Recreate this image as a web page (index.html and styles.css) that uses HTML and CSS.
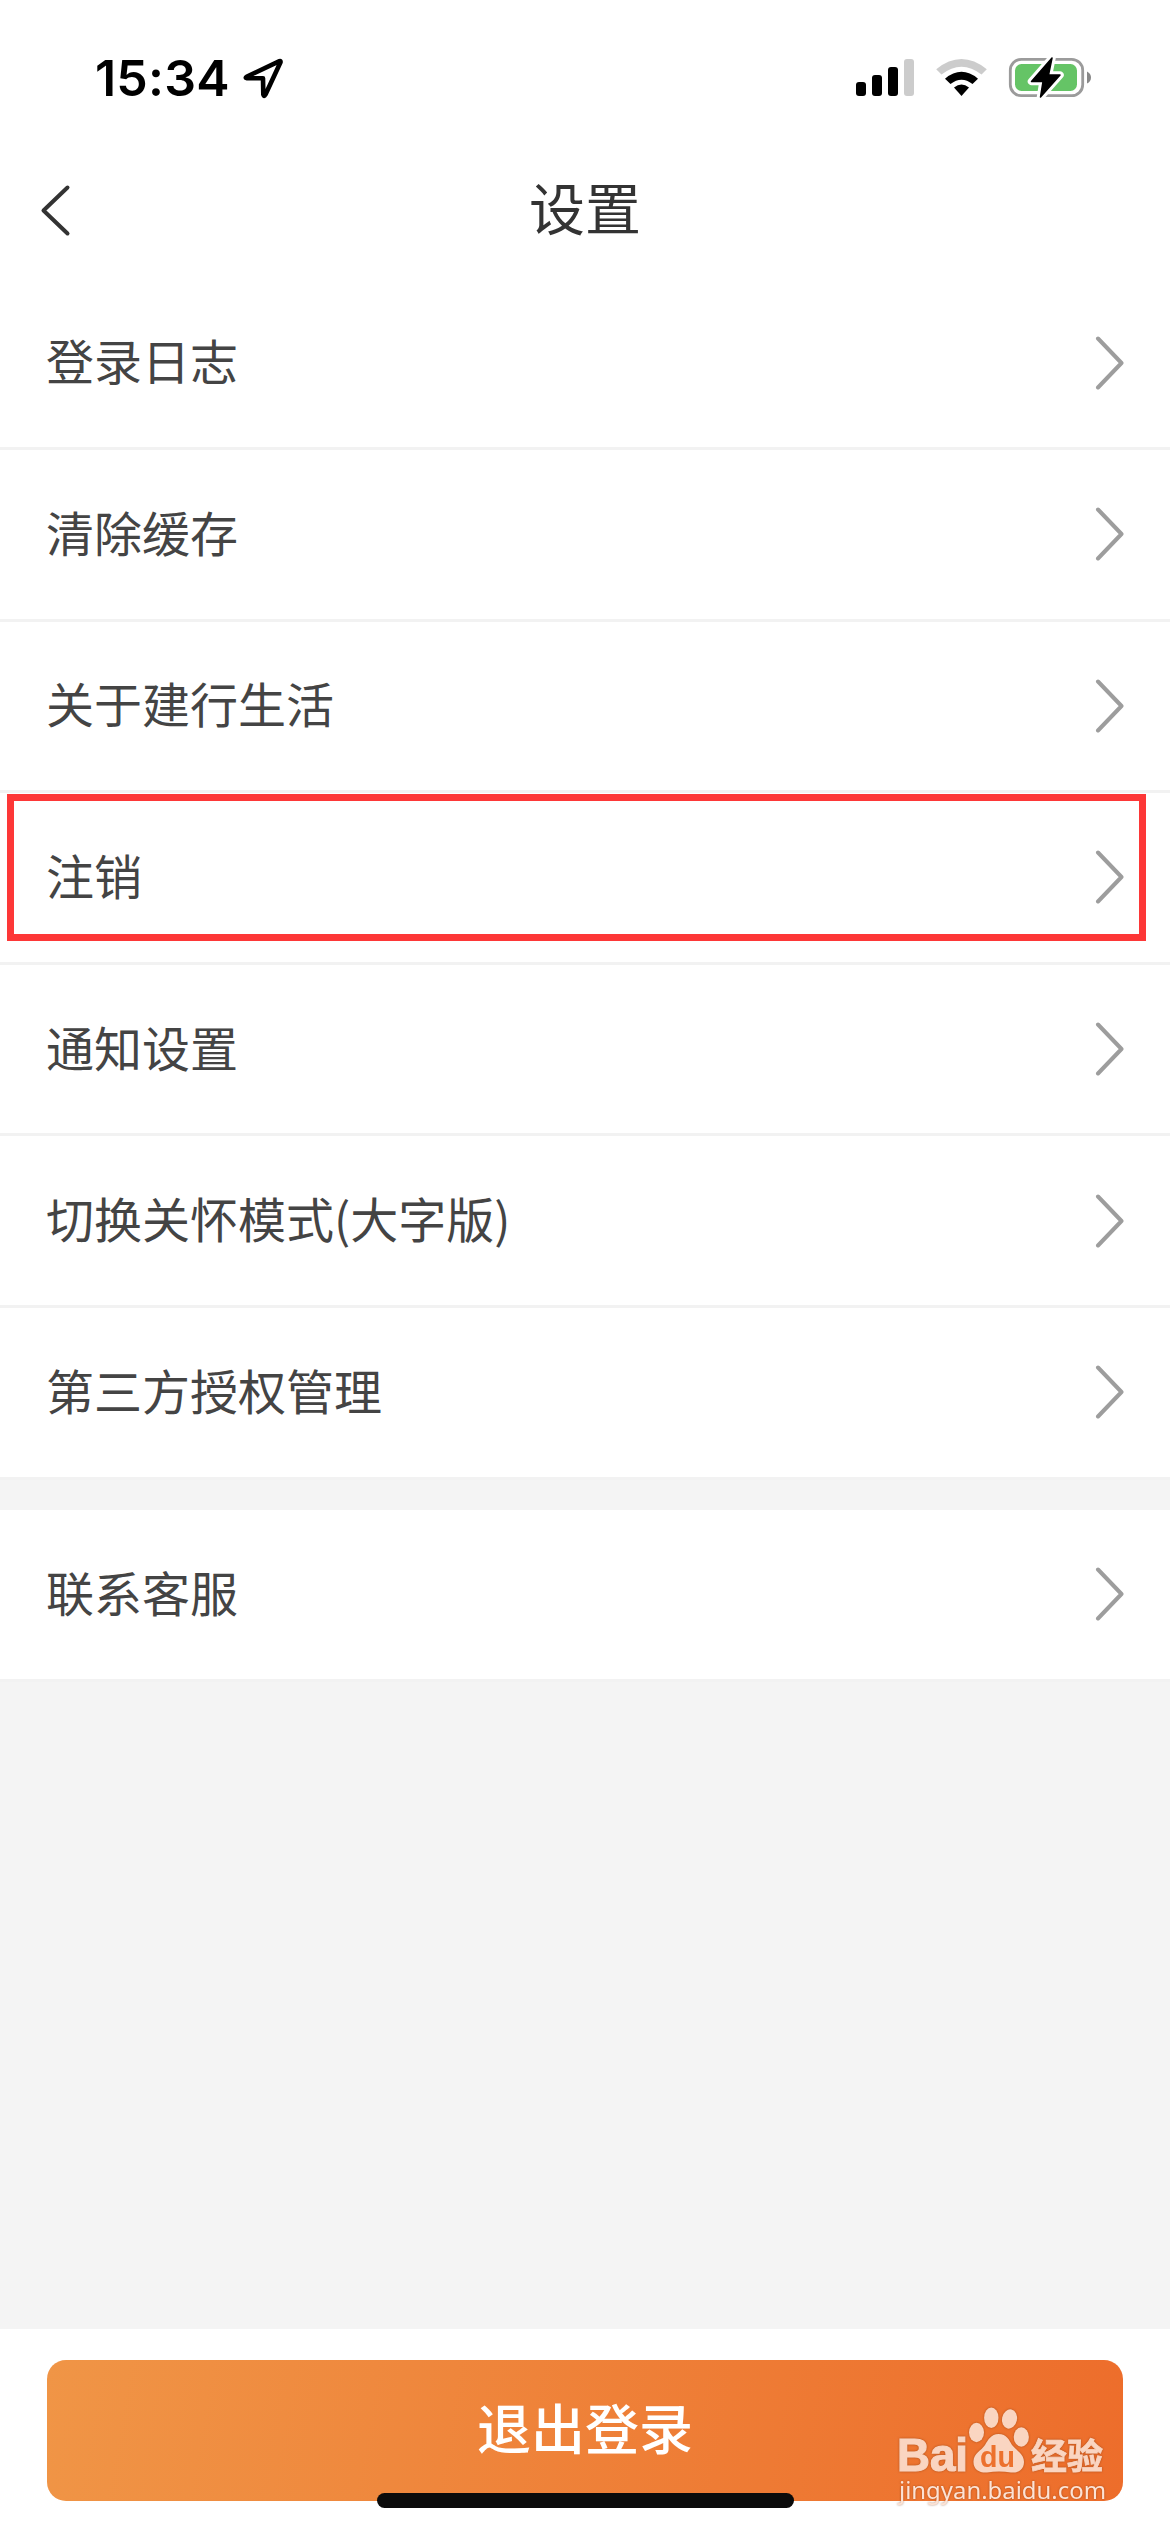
FILE: index.html
```
<!DOCTYPE html>
<html lang="zh-CN">
<head>
<meta charset="utf-8">
<title>设置</title>
<link rel="stylesheet" href="styles.css">
</head>
<body>
<svg class="defs" width="0" height="0">
  <symbol id="chevron" viewBox="0 0 30 56"><path d="M4 3.500 27.500 28 4 52.500" fill="none" stroke="#9d9d9d" stroke-width="4" stroke-linecap="round" stroke-linejoin="round"/></symbol>
</svg>
<div class="screen">
  <div class="status">
    <span class="time">15:34</span>
    <svg class="location" width="44" height="44" viewBox="240 56 44 44"><path d="M279.500 61.200 247 76.500Q244.500 77.800 247 78.200L263 78.200 263.300 94.500Q264 97.200 265.500 94.500L280.500 62.200Q280.800 60.700 279.500 61.200Z" fill="none" stroke="#000" stroke-width="4.600" stroke-linejoin="round"/></svg>
    <svg class="indicators" width="240" height="48" viewBox="852 54 240 48">
      <rect x="856" y="82" width="10" height="14" rx="3"/>
      <rect x="872" y="75" width="10" height="21" rx="3"/>
      <rect x="888" y="67" width="10" height="29" rx="3"/>
      <rect x="904" y="59" width="10" height="37" rx="3" fill="#ccc"/>
      <path d="M936.200 69.200Q961.500 48.800 986.800 69.200L981.500 74.500Q961.500 58.800 941.500 74.500Z" fill="#ccc"/>
      <path d="M945 78.700Q961.500 65 978 78.700L972.500 84Q961.500 75.500 950.500 84Z"/>
      <path d="M954 87.500Q961.500 81.500 969 87.500L961.500 96Z"/>
      <rect x="1010.300" y="59.300" width="72.400" height="36.400" rx="11" fill="none" stroke="#9b9b9b" stroke-width="2.800"/>
      <path d="M1087 71.500Q1091 73.500 1091 77.500T1087 83.500Z" fill="#888"/>
      <rect x="1015" y="64" width="62" height="27" rx="6.500" fill="#65c466"/>
      <path d="M1052 58 1031.500 81.500H1043L1040.500 97 1060 75H1048.500Z" fill="#fff" stroke="#fff" stroke-width="7.500" stroke-linejoin="round"/>
      <path d="M1052 58 1031.500 81.500H1043L1040.500 97 1060 75H1048.500Z" stroke="#000" stroke-width="1.500" stroke-linejoin="round"/>
    </svg>
  </div>
  <header class="nav">
    <svg class="back" width="32" height="54" viewBox="0 0 32 54"><path d="M27.500 4.500 3.500 27.500 27.500 50.500" fill="none" stroke="#333" stroke-width="4" stroke-linecap="round" stroke-linejoin="round"/></svg>
    <h1 class="title">设置</h1>
  </header>
  <main class="content">
    <ul class="group">
      <li class="row"><span class="label">登录日志</span><svg class="arrow"><use href="#chevron"/></svg></li>
      <li class="row"><span class="label">清除缓存</span><svg class="arrow"><use href="#chevron"/></svg></li>
      <li class="row"><span class="label">关于建行生活</span><svg class="arrow"><use href="#chevron"/></svg></li>
      <li class="row marked"><span class="label">注销</span><svg class="arrow"><use href="#chevron"/></svg></li>
      <li class="row"><span class="label">通知设置</span><svg class="arrow"><use href="#chevron"/></svg></li>
      <li class="row"><span class="label">切换关怀模式(大字版)</span><svg class="arrow"><use href="#chevron"/></svg></li>
      <li class="row"><span class="label">第三方授权管理</span><svg class="arrow"><use href="#chevron"/></svg></li>
    </ul>
    <ul class="group">
      <li class="row"><span class="label">联系客服</span><svg class="arrow"><use href="#chevron"/></svg></li>
    </ul>
  </main>
  <footer class="footer">
    <button class="logout">退出登录</button>
    <svg class="watermark" width="230" height="118" viewBox="890 2400 230 118">
      <g fill="#fad5c1">
        <text class="wm-latin" x="897" y="2471" textLength="71" lengthAdjust="spacingAndGlyphs">Bai</text>
        <ellipse cx="976.500" cy="2432.500" rx="7.500" ry="9.700"/>
        <ellipse cx="991.300" cy="2417.800" rx="7.200" ry="10.200"/>
        <ellipse cx="1009.500" cy="2419" rx="7.500" ry="9.700" transform="rotate(12 1009.500 2419)"/>
        <ellipse cx="1021.300" cy="2437" rx="7.600" ry="9.700"/>
        <path d="M998.500 2434C1007 2434 1009 2440 1012 2445 1017 2451 1024 2454 1024 2462 1024 2470 1018 2473 1011 2472.500Q999 2470.500 987 2472.500C979 2473 973 2469 973.500 2461 974 2453 981 2451 985 2445 988 2440 991 2434 998.500 2434Z"/>
        <text class="wm-cjk" x="1031" y="2469" textLength="72" lengthAdjust="spacingAndGlyphs">经验</text>
      </g>
      <text class="wm-du" x="980" y="2467" textLength="35" lengthAdjust="spacingAndGlyphs">du</text>
      <text class="wm-url" x="899" y="2499" textLength="207" lengthAdjust="spacingAndGlyphs">jingyan.baidu.com</text>
    </svg>
    <div class="home"></div>
  </footer>
</div>
</body>
</html>
```

FILE: styles.css
```
* { box-sizing: border-box; }
body { margin: 0; background: #f4f4f4; font-family: "Noto Sans CJK SC", sans-serif; }
.defs { display: block; }
.screen { display: flex; flex-direction: column; width: 1170px; height: 2532px; overflow: hidden; }
.status { display: flex; align-items: center; height: 140px; padding: 16px 78px 0 95px; background: #fff; }
.time { width: 136px; font: 600 50px/60px Inter, sans-serif; letter-spacing: 0.2px; white-space: nowrap; }
.location { margin-left: 9px; }
.indicators { margin-left: auto; }
.nav { display: grid; grid-template-columns: 100px 1fr 100px; align-items: center; height: 138.4px; padding: 0 40px; background: #fff; }
.back { margin-top: 2px; }
.title { margin: 0; padding-bottom: 6px; color: #333; font-size: 56px; font-weight: 400; line-height: 80px; text-align: center; }
.content { display: flex; flex: 1; flex-direction: column; gap: 30.4px; }
.group { margin: 0; padding: 0; list-style: none; }
.row { position: relative; display: flex; align-items: center; justify-content: space-between; height: 171.6px; padding: 0 46px; border-bottom: 3px solid #f2f2f2; background: #fff; color: #444; font-size: 48px; line-height: 72px; }
.label { padding-bottom: 7px; }
.arrow { width: 30px; height: 56px; }
.marked::after { content: ""; position: absolute; top: 1px; left: 7px; box-sizing: border-box; width: 1139px; height: 147px; border: 7px solid #fd3737; }
.footer { position: relative; height: 203px; padding: 31px 47px 0; background: #fff; }
.logout { display: block; width: 100%; height: 141px; padding: 0 0 8px; border: 0; border-radius: 19px; background: linear-gradient(100deg, #f09546, #ed6d2b); color: #fff; font: 500 54px/80px "Noto Sans CJK SC", sans-serif; }
.home { position: absolute; bottom: 24px; left: 377px; width: 417px; height: 15px; border-radius: 7.5px; background: #0b0b0b; }
.watermark { position: absolute; top: 71px; left: 890px; filter: drop-shadow(0 0 1px rgba(120, 50, 10, .55)); }
.wm-latin { stroke: #fad5c1; stroke-width: 1.2px; font: 700 46px "Liberation Sans", sans-serif; }
.wm-cjk { stroke: #fad5c1; stroke-width: .8px; font: 700 35px "Noto Sans CJK SC", sans-serif; }
.wm-du { fill: #ec712e; font: 700 29px "Liberation Sans", sans-serif; }
.wm-url { fill: #fce3d6; font: 400 24px "Noto Sans", sans-serif; }
```
